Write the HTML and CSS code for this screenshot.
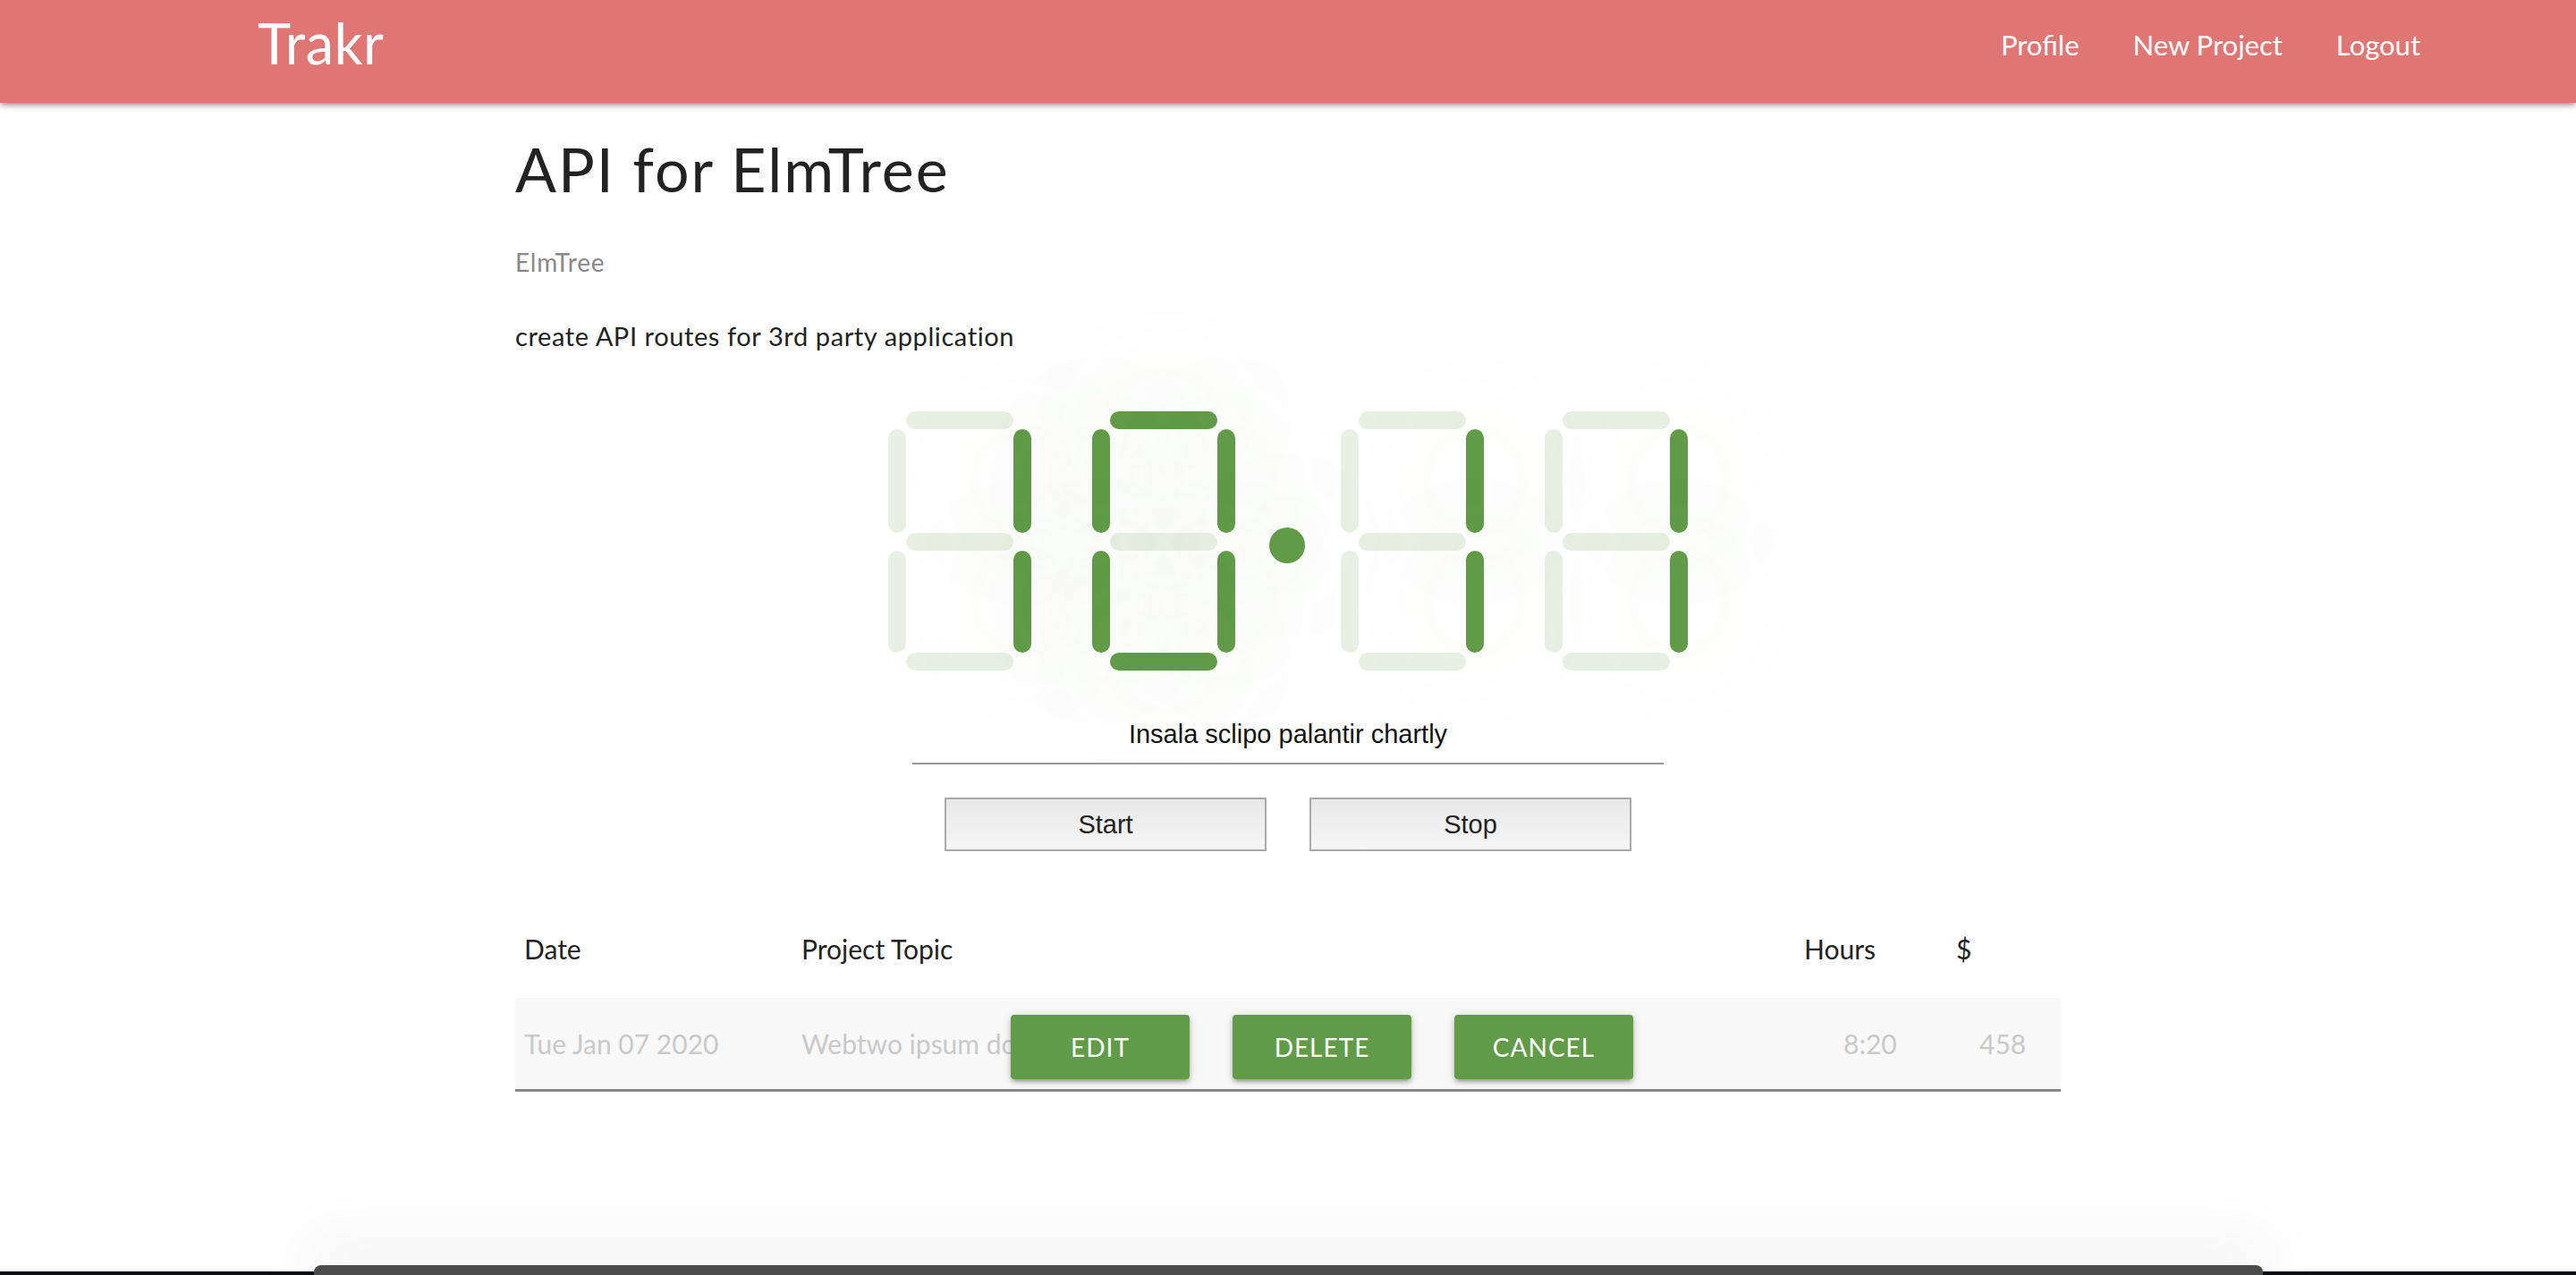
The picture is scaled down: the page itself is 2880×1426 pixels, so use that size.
FILE: index.html
```html
<!DOCTYPE html>
<html lang="en">
<head>
<meta charset="utf-8">
<title>Trakr - API for ElmTree</title>
<link rel="stylesheet" href="styles.css">
</head>
<body>
<header class="topbar">
  <a class="brand" href="#">Trakr</a>
  <ul class="nav-links">
    <li><a href="#">Profile</a></li>
    <li><a href="#">New Project</a></li>
    <li><a href="#">Logout</a></li>
  </ul>
</header>

<main class="page">
  <h1 class="title">API for ElmTree</h1>
  <p class="client">ElmTree</p>
  <p class="desc">create API routes for 3rd party application</p>

  <section class="timer">
    <div class="clock">
      <div class="digit">
        <span class="seg a"></span><span class="seg f"></span><span class="seg b on"></span><span class="seg g"></span><span class="seg e"></span><span class="seg c on"></span><span class="seg d"></span>
      </div>
      <div class="digit gap-wide">
        <span class="seg a on"></span><span class="seg f on"></span><span class="seg b on"></span><span class="seg g"></span><span class="seg e on"></span><span class="seg c on"></span><span class="seg d on"></span>
      </div>
      <span class="dot"></span>
      <div class="digit gap-dot">
        <span class="seg a"></span><span class="seg f"></span><span class="seg b on"></span><span class="seg g"></span><span class="seg e"></span><span class="seg c on"></span><span class="seg d"></span>
      </div>
      <div class="digit gap-wide">
        <span class="seg a"></span><span class="seg f"></span><span class="seg b on"></span><span class="seg g"></span><span class="seg e"></span><span class="seg c on"></span><span class="seg d"></span>
      </div>
    </div>
    <p class="task">Insala sclipo palantir chartly</p>
    <div class="controls">
      <button class="ctl" type="button">Start</button>
      <button class="ctl" type="button">Stop</button>
    </div>
  </section>

  <section class="log">
    <div class="log-head">
      <span>Date</span><span>Project Topic</span><span>Hours</span><span>$</span>
    </div>
    <div class="log-row">
      <span>Tue Jan 07 2020</span><span>Webtwo ipsum dolor</span><span>8:20</span><span>458</span>
      <div class="row-actions">
        <button class="btn" type="button">Edit</button>
        <button class="btn" type="button">Delete</button>
        <button class="btn" type="button">Cancel</button>
      </div>
    </div>
  </section>
</main>

<div class="screen-edge"></div>
<div class="dock"></div>
</body>
</html>
```

FILE: styles.css
```css
* { box-sizing: border-box; }

html, body {
  margin: 0;
  padding: 0;
  background: #fff;
}

body {
  font-family: Lato, "Open Sans", sans-serif;
  color: #222;
  height: 1426px;
  overflow: hidden;
}

/* ---------- top bar ---------- */
.topbar {
  position: relative;
  z-index: 2;
  height: 115px;
  background: #e07674;
  display: flex;
  justify-content: space-between;
  align-items: flex-start;
  padding: 0 144px 0 288px;
  box-shadow: 0 4px 4px 0 rgba(0,0,0,.14), 0 6px 2px -4px rgba(0,0,0,.12), 0 2px 10px 0 rgba(0,0,0,.2);
}

.brand {
  color: #fff;
  font-size: 63px;
  line-height: 76px;
  margin-top: 10px;
  text-decoration: none;
  letter-spacing: 0.5px;
}

.nav-links {
  list-style: none;
  display: flex;
  margin: 0;
  padding: 30px 0 0;
}

.nav-links a {
  display: block;
  color: #fff;
  font-size: 31px;
  line-height: 40px;
  padding: 0 30px;
  text-decoration: none;
}

/* ---------- page ---------- */
.page {
  width: 1728px;
  margin: 0 auto;
}

.title {
  font-size: 68px;
  line-height: 80px;
  font-weight: 400;
  letter-spacing: 2px;
  margin: 34px 0 0;
}

.client {
  font-size: 28px;
  line-height: 36px;
  letter-spacing: 0.8px;
  color: #888;
  margin: 46px 0 0;
}

.desc {
  font-size: 29px;
  line-height: 38px;
  letter-spacing: 0.6px;
  margin: 46px 0 0;
}

/* ---------- timer ---------- */
.timer {
  display: flex;
  flex-direction: column;
  align-items: center;
  margin-top: 65px;
}

.clock {
  display: flex;
  align-items: flex-start;
}

.digit {
  display: grid;
  grid-template-columns: 20px 120px 20px;
  grid-template-rows: 20px 116px 20px 114px 20px;
  width: 160px;
  height: 290px;
}

.gap-wide { margin-left: 68px; }
.gap-dot { margin-left: 40px; }

.seg {
  background: rgba(98, 155, 72, .15);
  border-radius: 10px;
}

.seg.on {
  background: #629b48;
  box-shadow: 0 0 140px 16px rgba(98, 155, 72, .08);
}

.a { grid-area: 1 / 2 / 2 / 3; }
.f { grid-area: 2 / 1 / 3 / 2; }
.b { grid-area: 2 / 3 / 3 / 4; }
.g { grid-area: 3 / 2 / 4 / 3; }
.e { grid-area: 4 / 1 / 5 / 2; }
.c { grid-area: 4 / 3 / 5 / 4; }
.d { grid-area: 5 / 2 / 6 / 3; }

.dot {
  width: 40px;
  height: 40px;
  margin: 130px 0 0 38px;
  border-radius: 50%;
  background: #629b48;
  box-shadow: 0 0 140px 16px rgba(98, 155, 72, .08);
}

.task {
  width: 840px;
  margin: 53px 0 0;
  padding-bottom: 14px;
  border-bottom: 2px solid #999;
  font-family: "Liberation Sans", Arial, sans-serif;
  font-size: 29px;
  line-height: 36px;
  text-align: center;
  color: #111;
}

.controls {
  display: flex;
  gap: 48px;
  margin-top: 37px;
}

.ctl {
  width: 360px;
  height: 60px;
  border: 2px solid #aaa;
  border-radius: 0;
  background: linear-gradient(#e8e8e8, #f6f6f6);
  font-family: "Liberation Sans", Arial, sans-serif;
  font-size: 29px;
  color: #222;
  padding: 0;
}

/* ---------- log table ---------- */
.log {
  margin-top: 62px;
}

.log-head,
.log-row {
  display: grid;
  font-size: 30px;
  line-height: 42px;
}

.log-head > span,
.log-row > span {
  padding: 30px 10px;
  white-space: nowrap;
}

.log-head > span {
  padding: 26px 10px 34px;
}

.log-head {
  grid-template-columns: 310px 1121px 170px 1fr;
  color: #222;
}

.log-row {
  position: relative;
  grid-template-columns: 310px 1165px 152px 1fr;
  background: #f8f8f8;
  border-bottom: 3px solid #888;
  color: #c9c9c9;
}

.row-actions {
  position: absolute;
  left: 554px;
  top: 19px;
  display: flex;
  gap: 48px;
}

.btn {
  width: 200px;
  height: 72px;
  border: none;
  border-radius: 4px;
  background: #629b48;
  color: #fff;
  font-family: Lato, "Open Sans", sans-serif;
  font-size: 28px;
  letter-spacing: 1px;
  text-transform: uppercase;
  padding: 0;
  box-shadow: 0 4px 4px 0 rgba(0,0,0,.14), 0 6px 2px -4px rgba(0,0,0,.12), 0 2px 10px 0 rgba(0,0,0,.2);
}

/* ---------- screen bottom overlay ---------- */
.screen-edge {
  position: fixed;
  left: 0;
  right: 0;
  bottom: 0;
  height: 4px;
  background: #0b0d12;
}

.dock {
  position: fixed;
  left: 351px;
  right: 350px;
  bottom: 0;
  height: 11px;
  background: #4b4b4b;
  border-radius: 8px 8px 0 0;
  box-shadow: 0 -10px 70px 12px rgba(0,0,0,.08);
  z-index: 5;
}
```
